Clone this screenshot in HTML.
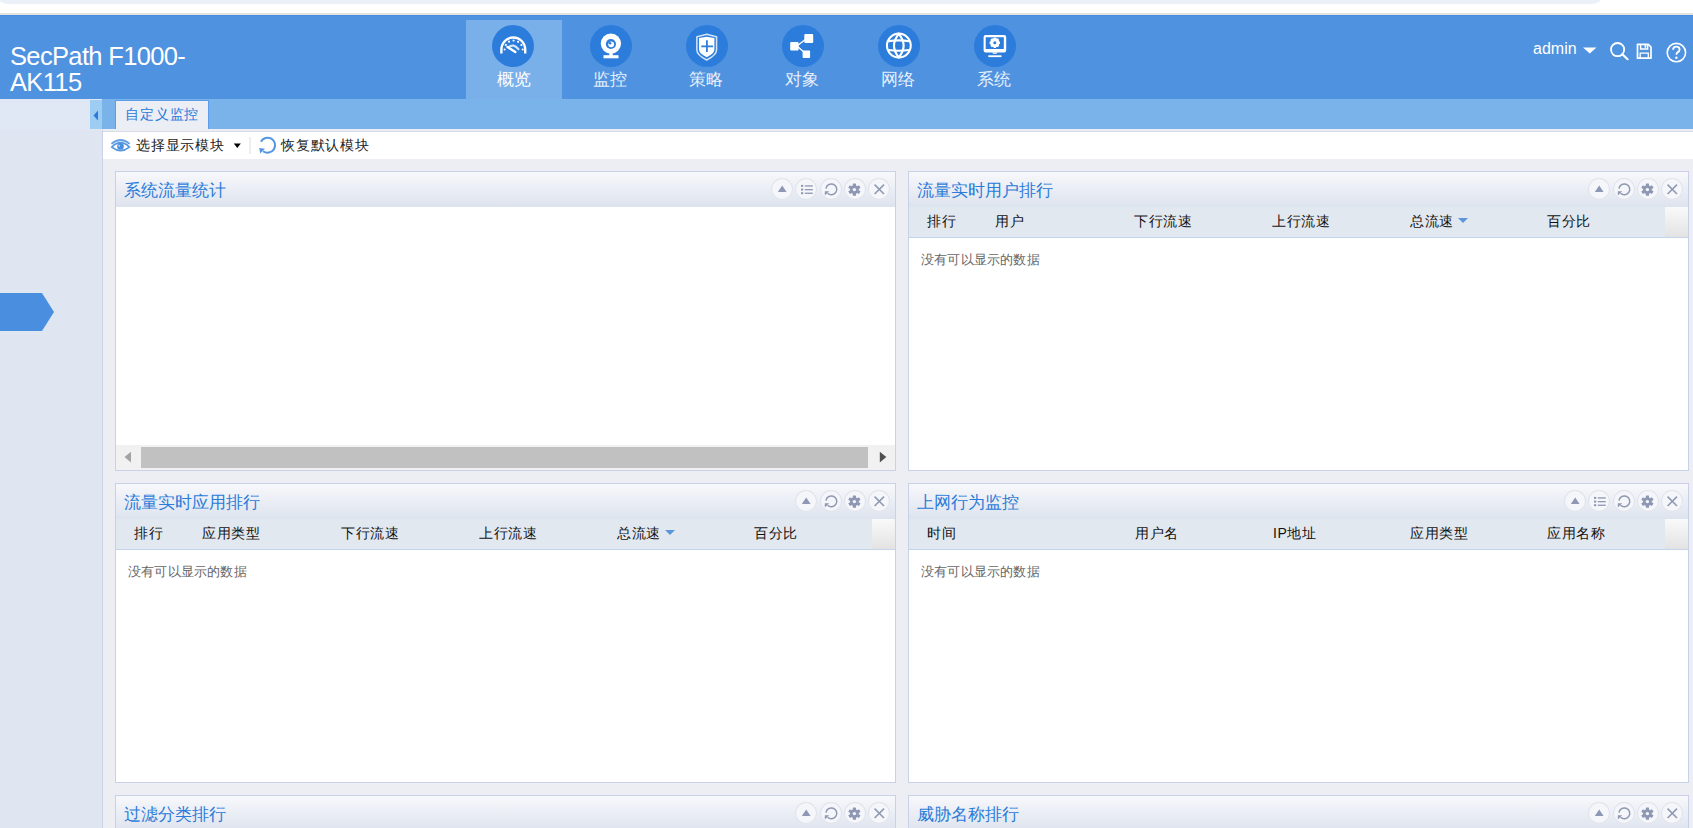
<!DOCTYPE html>
<html><head><meta charset="utf-8">
<style>
*{box-sizing:border-box;margin:0;padding:0}
html,body{width:1693px;height:828px;overflow:hidden;background:#fff;font-family:"Liberation Sans",sans-serif;position:relative}
.abs{position:absolute}
#topbar{left:-3px;top:-16px;width:1606px;height:20px;background:#ecf0f9;border-radius:20px}
#topline{left:0;top:13px;width:1693px;height:2px;background:linear-gradient(#e0e2e0,#e9e7e2)}
#header{left:0;top:15px;width:1693px;height:84px;background:#4f92df;border-top:1px solid #458bdf}
#title{left:10px;top:43px;color:#fff;font-size:25.5px;line-height:26px;letter-spacing:-0.65px}
.nav{top:20px;width:96px;height:79px}
.nav.active{background:#7ab0ea}
.nav .ic{position:absolute;left:27px;top:4.8px;width:42px;height:42px;border-radius:50%;background:#2c7ddb}
.nav .ic svg{position:absolute;left:0;top:0}
.nav .lb{position:absolute;left:0;top:49px;width:96px;text-align:center;color:#e6effb;font-size:17px;line-height:22px}
.nav.active .lb{color:#fff}
#tabbar{left:102px;top:99px;width:1591px;height:30px;background:#7ab3ea}
#sidetop{left:0;top:99px;width:103px;height:31px;background:#e0e8f5}
#collapse{left:90px;top:100px;width:12px;height:29px;background:#9dcdf3}
#tab{left:115px;top:100px;width:94px;height:29px;background:#eceef5;border:1px solid #5b9de6;border-bottom:none;color:#2a7ad9;font-size:14px;line-height:27px;text-align:center;letter-spacing:0.8px;text-indent:0.4px}
#side{left:0;top:130px;width:103px;height:698px;background:#dfe5f1;border-right:1px solid #c9d3e6}
#toolbar{left:103px;top:131px;width:1590px;height:28px;background:#fff;border-top:1px solid #d5dbe8}
#main{left:103px;top:129px;width:1590px;height:699px;background:#eceef4}
#arrow{left:0;top:293px}
.panel{position:absolute;width:781px;height:300px;background:#fff;border:1px solid #c9d1e8}
.ph{position:absolute;left:0;top:0;width:100%;height:35px;background:linear-gradient(#f7f8fb,#dde3ee)}
.pt{position:absolute;left:8.3px;top:8px;font-size:17px;line-height:22px;color:#2b7bd9}
.btns{position:absolute;right:5px;top:6px;height:22px}
.btn{float:left;width:22px;height:22px;margin-left:2.2px;border-radius:50%;background:#f5f6f9;box-shadow:0 0 0 1px #e0e3eb inset;position:relative}.btn svg{position:absolute;left:0.5px;top:0.5px}
.btn svg{display:block}
.th{position:absolute;left:0;top:35px;width:100%;height:31px;background:#e2e8f0;border-bottom:1px solid #c6d3ea}
.th span{position:absolute;top:5px;font-size:14px;line-height:18px;color:#111;letter-spacing:0.5px}
.th .ph2{position:absolute;right:0;top:0;width:23px;height:30px;background:linear-gradient(#f9f9f9,#e3e3e3)}
.nodata{position:absolute;left:12px;top:79px;font-size:13px;color:#666;line-height:18px;letter-spacing:0.2px}
.sortc{display:inline-block;width:0;height:0;border-left:5px solid transparent;border-right:5px solid transparent;border-top:5px solid #5b95dc;margin-left:4.5px;vertical-align:middle;position:relative;top:-2px}
</style></head><body>
<div id="topbar" class="abs"></div>
<div id="topline" class="abs"></div>
<div id="header" class="abs"></div>
<div id="title" class="abs">SecPath F1000-<br>AK115</div>

<div class="abs nav active" style="left:466px"><div class="ic" style="left:26.3px"><svg width="42" height="42" viewBox="0 0 42 42"><g fill="none" stroke="#fff" stroke-width="2.4"><path d="M9.4 28.4V24.4A11.9 11.9 0 0 1 33.2 24.4V28.4"/></g><g fill="#fff"><circle cx="21.6" cy="15.6" r="1.1"/><circle cx="17" cy="16.7" r="1.1"/><circle cx="26.1" cy="16.8" r="1.1"/><circle cx="13.8" cy="19.9" r="1.1"/><circle cx="29.4" cy="20" r="1.1"/><circle cx="12.6" cy="24.4" r="1"/><circle cx="30.7" cy="24.6" r="1"/></g><path d="M15.5 21.9L23.3 27" stroke="#fff" stroke-width="2.4" stroke-linecap="round"/><path d="M16.2 22.6Q21.5 17.6 27 24.9" fill="none" stroke="#fff" stroke-opacity=".8" stroke-width="2.2"/></svg></div><div class="lb">概览</div></div>
<div class="abs nav" style="left:562px"><div class="ic" style="left:27.6px"><svg width="42" height="42" viewBox="0 0 42 42"><circle cx="20.9" cy="18.6" r="10.15" fill="#fff"/><circle cx="20.9" cy="19" r="5.1" fill="#2d7ddb"/><circle cx="21.2" cy="19.3" r="2.9" fill="#fff"/><circle cx="20.1" cy="18.2" r="1.3" fill="#2d7ddb"/><rect x="19.3" y="27" width="3.4" height="4" fill="#fff"/><rect x="13.5" y="30.2" width="15" height="3.1" fill="#fff"/></svg></div><div class="lb">监控</div></div>
<div class="abs nav" style="left:658px"><div class="ic" style="left:27.8px"><svg width="42" height="42" viewBox="0 0 42 42"><path d="M20.7 9.35L30.55 11.8V25Q30.55 30 20.7 35Q10.85 30 10.85 25V11.8Z" fill="none" stroke="#fff" stroke-opacity=".8" stroke-width="1.5"/><path d="M20.7 11.8L28.4 12.9V24.6Q28.4 28.5 20.7 32.3Q13 28.5 13 24.6V12.9Z" fill="#fff"/><path d="M15.3 21.3H27.1M20.9 15.3V26.9" stroke="#2d7ddb" stroke-width="1.8"/></svg></div><div class="lb">策略</div></div>
<div class="abs nav" style="left:754px"><div class="ic" style="left:27.7px"><svg width="42" height="42" viewBox="0 0 42 42"><path d="M15 21L24 14M15 21L23 28" stroke="#fff" stroke-width="1.4"/><rect x="22.3" y="9" width="8.9" height="8.9" rx="1" fill="#fff"/><rect x="8.2" y="17" width="8.4" height="8.4" rx="1" fill="#fff"/><rect x="20.6" y="25.4" width="7.5" height="7.6" rx="1" fill="#fff"/></svg></div><div class="lb">对象</div></div>
<div class="abs nav" style="left:850px"><div class="ic" style="left:27.8px"><svg width="42" height="42" viewBox="0 0 42 42"><g fill="none" stroke="#fff" stroke-width="2.1"><circle cx="20.85" cy="20.55" r="11.9"/><path d="M20.8 8.8Q30.4 20.6 20.8 32.3Q11.2 20.6 20.8 8.8Z"/><path d="M10.3 16.3Q20.8 14.5 31.4 16.3M10.3 25Q20.8 26.6 31.4 25"/></g></svg></div><div class="lb">网络</div></div>
<div class="abs nav" style="left:946px"><div class="ic" style="left:27.7px"><svg width="42" height="42" viewBox="0 0 42 42"><path d="M11.6 10H30.2Q32.2 10 32.2 12V25.4Q32.2 27.4 30.2 27.4H11.6Q9.6 27.4 9.6 25.4V12Q9.6 10 11.6 10ZM11.7 12.3V24.1H29.8V12.3Z" fill="#fff" fill-rule="evenodd"/><path d="M18.3 27.4H23.3L22.6 28.8H19Z" fill="#fff"/><rect x="14.3" y="30.3" width="13.2" height="1.8" fill="#fff"/><g transform="translate(20.8 17.8)"><circle r="3.6" fill="none" stroke="#fff" stroke-width="2.2"/><g fill="#fff"><rect x="-1.1" y="-5.2" width="2.2" height="10.4"/><rect x="-1.1" y="-5.2" width="2.2" height="10.4" transform="rotate(45)"/><rect x="-1.1" y="-5.2" width="2.2" height="10.4" transform="rotate(90)"/><rect x="-1.1" y="-5.2" width="2.2" height="10.4" transform="rotate(135)"/></g><circle r="1.5" fill="#2d7ddb"/></g></svg></div><div class="lb">系统</div></div>

<div class="abs" style="left:1533px;top:39.5px;color:#fff;font-size:16px;line-height:18px">admin</div>

<svg class="abs" style="left:1583px;top:46px" width="14" height="8"><path d="M0 1.5H13.5L6.75 7.6Z" fill="#fff"/></svg>
<svg class="abs" style="left:1609px;top:41px" width="22" height="20"><circle cx="8.6" cy="8.6" r="6.6" fill="none" stroke="#fff" stroke-width="1.8"/><path d="M13.3 13.3L18.6 18.2" stroke="#fff" stroke-width="2.2" stroke-linecap="round"/></svg>
<svg class="abs" style="left:1636px;top:43px" width="17" height="17"><path d="M1.5 1.3H12.3L15 4V15.2H1.5Z" fill="none" stroke="#fff" stroke-width="1.7" stroke-linejoin="round"/><path d="M4.6 1.3V6H11.6V1.3" fill="none" stroke="#fff" stroke-width="1.5"/><rect x="8.6" y="2" width="1.6" height="2.8" fill="#fff"/><path d="M4.2 15V10.2H12.3V15" fill="none" stroke="#fff" stroke-width="1.3"/></svg>
<svg class="abs" style="left:1665px;top:41px" width="23" height="23"><circle cx="11.4" cy="11.6" r="9.2" fill="none" stroke="#fff" stroke-width="1.6"/><path d="M8.1 8.7Q8.1 5.6 11.4 5.6Q14.6 5.6 14.6 8.6Q14.6 10.4 12.6 11.4Q11.4 12 11.4 13.8" fill="none" stroke="#fff" stroke-width="1.8"/><circle cx="11.4" cy="16.8" r="1.2" fill="#fff"/></svg>
<div id="sidetop" class="abs"></div>
<div id="tabbar" class="abs"></div>
<div id="collapse" class="abs"><svg style="position:absolute;left:3px;top:10px" width="6" height="11"><path d="M5 0.5V10.5L0.5 5.5Z" fill="#2f7ad8"/></svg></div>
<div id="side" class="abs"></div>
<div id="main" class="abs"></div>
<div id="toolbar" class="abs"></div>
<div id="tab" class="abs">自定义监控</div>

<svg class="abs" style="left:106px;top:132px" width="30" height="25"><path d="M5.4 11.8Q14.5 4.2 23.7 11.8" fill="none" stroke="#5596e0" stroke-opacity=".9" stroke-width="1.7"/><path d="M5.8 15.1Q14.5 6.3 23.4 15.1Q14.5 22.1 5.8 15.1Z" fill="none" stroke="#5596e0" stroke-width="1.7"/><circle cx="14.5" cy="14.4" r="3.3" fill="#4a8ede"/><circle cx="13.2" cy="13.8" r="1" fill="#b8d3f2"/></svg>
<svg class="abs" style="left:233px;top:143px" width="10" height="6"><path d="M0.8 0.6H7.8L4.3 4.9Z" fill="#000"/></svg>
<div class="abs" style="left:249px;top:137px;width:2px;height:17px;background:#eeeeee"></div>
<svg class="abs" style="left:257px;top:135px" width="20" height="21"><path d="M3.9 6.8A7.5 7.5 0 1 1 6.1 16.2" fill="none" stroke="#5596e3" stroke-width="2"/><path d="M2.2 12.9L8 13.7L3.2 18.6Z" fill="#5596e3"/></svg>
<svg id="arrow" class="abs" width="54" height="38"><path d="M0 0H42L54 19L42 38H0Z" fill="#4a8fdf"/></svg>

<div class="abs" style="left:136px;top:136px;font-size:14px;letter-spacing:0.8px;line-height:18px;color:#222">选择显示模块</div>
<div class="abs" style="left:281px;top:136px;font-size:14px;letter-spacing:0.8px;line-height:18px;color:#222">恢复默认模块</div>

<!-- panels -->
<div class="panel" style="left:115px;top:171px">
  <div class="ph"><div class="pt">系统流量统计</div><div class="btns"><div class="btn"><svg width="21" height="21"><path d="M5.8 12.9H14.6L10.2 6.6Z" fill="#8e97b3"/></svg></div><div class="btn"><svg width="21" height="21"><g fill="#8e97b3"><rect x="5" y="5.9" width="2.2" height="2"/><rect x="5" y="9.6" width="2.2" height="2"/><rect x="5" y="13.2" width="2.2" height="2"/><rect x="8.8" y="6.3" width="8" height="1.3"/><rect x="8.8" y="10" width="8" height="1.3"/><rect x="8.8" y="13.6" width="8" height="1.3"/></g></svg></div><div class="btn"><svg width="21" height="21"><path d="M6 9.6A5.4 5.4 0 1 1 7.6 14.2" fill="none" stroke="#8e97b3" stroke-width="1.5"/><path d="M4.8 12.2H9.2L4.8 16.4Z" fill="#8e97b3"/></svg></div><div class="btn"><svg width="21" height="21"><g transform="translate(10.4 10.6)" fill="#8e97b3"><circle r="4.3"/><rect x="-1.6" y="-6.2" width="3.2" height="12.4" rx=".6"/><rect x="-1.6" y="-6.2" width="3.2" height="12.4" rx=".6" transform="rotate(60)"/><rect x="-1.6" y="-6.2" width="3.2" height="12.4" rx=".6" transform="rotate(120)"/><circle r="1.7" fill="#f4f5f9"/></g></svg></div><div class="btn"><svg width="21" height="21"><path d="M5.6 5.6L15 15M15 5.6L5.6 15" stroke="#8e97b3" stroke-width="1.5"/></svg></div></div></div><div style="position:absolute;left:0;top:273px;width:779px;height:25px;background:#f1f1f1"><svg style="position:absolute;left:7px;top:6px" width="10" height="12"><path d="M8 0.8V11.4L1.5 6.1Z" fill="#a3a3a3"/></svg><div style="position:absolute;left:25px;top:2px;width:727px;height:20.6px;background:#c1c1c1"></div><svg style="position:absolute;left:762px;top:6px" width="10" height="12"><path d="M1.8 0.8V11.4L8.3 6.1Z" fill="#505050"/></svg></div>
</div>
<div class="panel" style="left:908px;top:171px">
  <div class="ph"><div class="pt">流量实时用户排行</div><div class="btns"><div class="btn"><svg width="21" height="21"><path d="M5.8 12.9H14.6L10.2 6.6Z" fill="#8e97b3"/></svg></div><div class="btn"><svg width="21" height="21"><path d="M6 9.6A5.4 5.4 0 1 1 7.6 14.2" fill="none" stroke="#8e97b3" stroke-width="1.5"/><path d="M4.8 12.2H9.2L4.8 16.4Z" fill="#8e97b3"/></svg></div><div class="btn"><svg width="21" height="21"><g transform="translate(10.4 10.6)" fill="#8e97b3"><circle r="4.3"/><rect x="-1.6" y="-6.2" width="3.2" height="12.4" rx=".6"/><rect x="-1.6" y="-6.2" width="3.2" height="12.4" rx=".6" transform="rotate(60)"/><rect x="-1.6" y="-6.2" width="3.2" height="12.4" rx=".6" transform="rotate(120)"/><circle r="1.7" fill="#f4f5f9"/></g></svg></div><div class="btn"><svg width="21" height="21"><path d="M5.6 5.6L15 15M15 5.6L5.6 15" stroke="#8e97b3" stroke-width="1.5"/></svg></div></div></div>
  <div class="th"><span style="left:18px">排行</span><span style="left:86px">用户</span><span style="left:225px">下行流速</span><span style="left:363px">上行流速</span><span style="left:501px">总流速<i class="sortc"></i></span><span style="left:638px">百分比</span><div class="ph2"></div></div>
  <div class="nodata">没有可以显示的数据</div>
</div>
<div class="panel" style="left:115px;top:483px">
  <div class="ph"><div class="pt">流量实时应用排行</div><div class="btns"><div class="btn"><svg width="21" height="21"><path d="M5.8 12.9H14.6L10.2 6.6Z" fill="#8e97b3"/></svg></div><div class="btn"><svg width="21" height="21"><path d="M6 9.6A5.4 5.4 0 1 1 7.6 14.2" fill="none" stroke="#8e97b3" stroke-width="1.5"/><path d="M4.8 12.2H9.2L4.8 16.4Z" fill="#8e97b3"/></svg></div><div class="btn"><svg width="21" height="21"><g transform="translate(10.4 10.6)" fill="#8e97b3"><circle r="4.3"/><rect x="-1.6" y="-6.2" width="3.2" height="12.4" rx=".6"/><rect x="-1.6" y="-6.2" width="3.2" height="12.4" rx=".6" transform="rotate(60)"/><rect x="-1.6" y="-6.2" width="3.2" height="12.4" rx=".6" transform="rotate(120)"/><circle r="1.7" fill="#f4f5f9"/></g></svg></div><div class="btn"><svg width="21" height="21"><path d="M5.6 5.6L15 15M15 5.6L5.6 15" stroke="#8e97b3" stroke-width="1.5"/></svg></div></div></div>
  <div class="th"><span style="left:18px">排行</span><span style="left:86px">应用类型</span><span style="left:225px">下行流速</span><span style="left:363px">上行流速</span><span style="left:501px">总流速<i class="sortc"></i></span><span style="left:638px">百分比</span><div class="ph2"></div></div>
  <div class="nodata">没有可以显示的数据</div>
</div>
<div class="panel" style="left:908px;top:483px">
  <div class="ph"><div class="pt">上网行为监控</div><div class="btns"><div class="btn"><svg width="21" height="21"><path d="M5.8 12.9H14.6L10.2 6.6Z" fill="#8e97b3"/></svg></div><div class="btn"><svg width="21" height="21"><g fill="#8e97b3"><rect x="5" y="5.9" width="2.2" height="2"/><rect x="5" y="9.6" width="2.2" height="2"/><rect x="5" y="13.2" width="2.2" height="2"/><rect x="8.8" y="6.3" width="8" height="1.3"/><rect x="8.8" y="10" width="8" height="1.3"/><rect x="8.8" y="13.6" width="8" height="1.3"/></g></svg></div><div class="btn"><svg width="21" height="21"><path d="M6 9.6A5.4 5.4 0 1 1 7.6 14.2" fill="none" stroke="#8e97b3" stroke-width="1.5"/><path d="M4.8 12.2H9.2L4.8 16.4Z" fill="#8e97b3"/></svg></div><div class="btn"><svg width="21" height="21"><g transform="translate(10.4 10.6)" fill="#8e97b3"><circle r="4.3"/><rect x="-1.6" y="-6.2" width="3.2" height="12.4" rx=".6"/><rect x="-1.6" y="-6.2" width="3.2" height="12.4" rx=".6" transform="rotate(60)"/><rect x="-1.6" y="-6.2" width="3.2" height="12.4" rx=".6" transform="rotate(120)"/><circle r="1.7" fill="#f4f5f9"/></g></svg></div><div class="btn"><svg width="21" height="21"><path d="M5.6 5.6L15 15M15 5.6L5.6 15" stroke="#8e97b3" stroke-width="1.5"/></svg></div></div></div>
  <div class="th"><span style="left:18px">时间</span><span style="left:226px">用户名</span><span style="left:364px">IP地址</span><span style="left:501px">应用类型</span><span style="left:638px">应用名称</span><div class="ph2"></div></div>
  <div class="nodata">没有可以显示的数据</div>
</div>
<div class="panel" style="left:115px;top:795px">
  <div class="ph"><div class="pt">过滤分类排行</div><div class="btns"><div class="btn"><svg width="21" height="21"><path d="M5.8 12.9H14.6L10.2 6.6Z" fill="#8e97b3"/></svg></div><div class="btn"><svg width="21" height="21"><path d="M6 9.6A5.4 5.4 0 1 1 7.6 14.2" fill="none" stroke="#8e97b3" stroke-width="1.5"/><path d="M4.8 12.2H9.2L4.8 16.4Z" fill="#8e97b3"/></svg></div><div class="btn"><svg width="21" height="21"><g transform="translate(10.4 10.6)" fill="#8e97b3"><circle r="4.3"/><rect x="-1.6" y="-6.2" width="3.2" height="12.4" rx=".6"/><rect x="-1.6" y="-6.2" width="3.2" height="12.4" rx=".6" transform="rotate(60)"/><rect x="-1.6" y="-6.2" width="3.2" height="12.4" rx=".6" transform="rotate(120)"/><circle r="1.7" fill="#f4f5f9"/></g></svg></div><div class="btn"><svg width="21" height="21"><path d="M5.6 5.6L15 15M15 5.6L5.6 15" stroke="#8e97b3" stroke-width="1.5"/></svg></div></div></div>
</div>
<div class="panel" style="left:908px;top:795px">
  <div class="ph"><div class="pt">威胁名称排行</div><div class="btns"><div class="btn"><svg width="21" height="21"><path d="M5.8 12.9H14.6L10.2 6.6Z" fill="#8e97b3"/></svg></div><div class="btn"><svg width="21" height="21"><path d="M6 9.6A5.4 5.4 0 1 1 7.6 14.2" fill="none" stroke="#8e97b3" stroke-width="1.5"/><path d="M4.8 12.2H9.2L4.8 16.4Z" fill="#8e97b3"/></svg></div><div class="btn"><svg width="21" height="21"><g transform="translate(10.4 10.6)" fill="#8e97b3"><circle r="4.3"/><rect x="-1.6" y="-6.2" width="3.2" height="12.4" rx=".6"/><rect x="-1.6" y="-6.2" width="3.2" height="12.4" rx=".6" transform="rotate(60)"/><rect x="-1.6" y="-6.2" width="3.2" height="12.4" rx=".6" transform="rotate(120)"/><circle r="1.7" fill="#f4f5f9"/></g></svg></div><div class="btn"><svg width="21" height="21"><path d="M5.6 5.6L15 15M15 5.6L5.6 15" stroke="#8e97b3" stroke-width="1.5"/></svg></div></div></div>
</div>

</body></html>
